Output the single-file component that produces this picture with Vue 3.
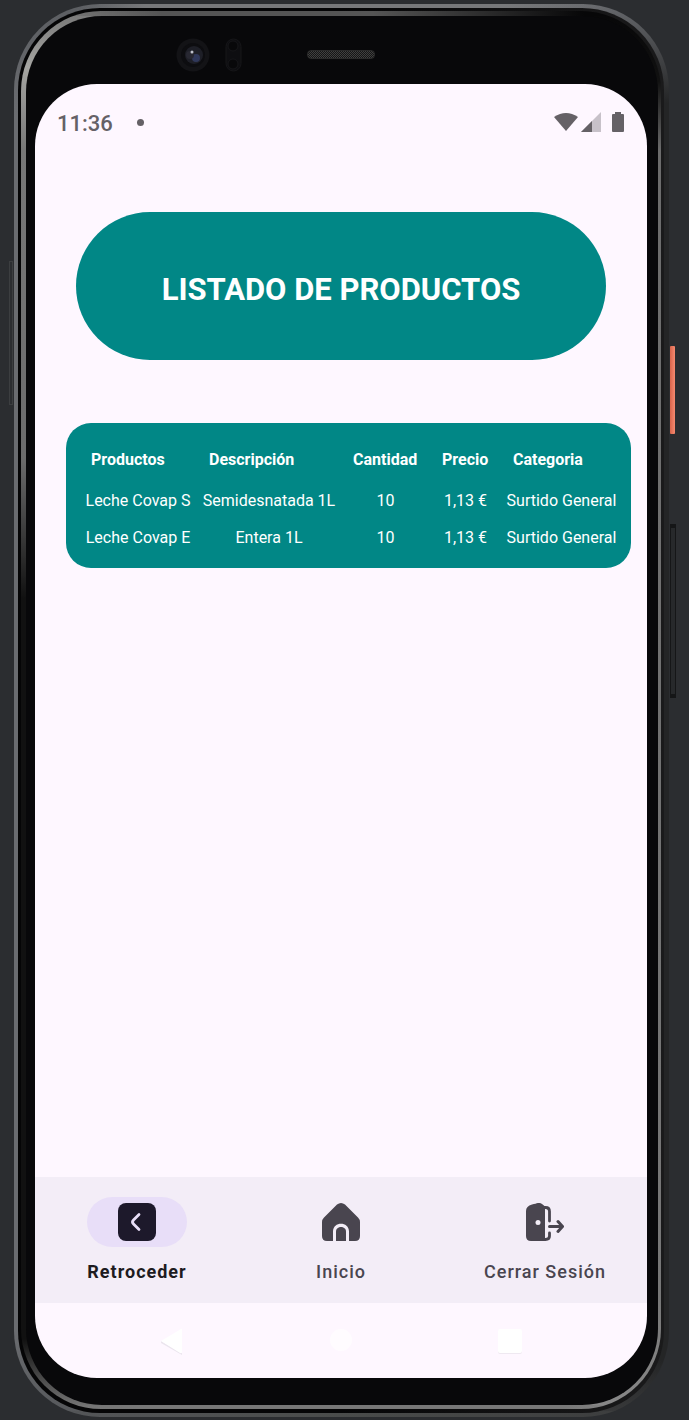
<script setup>
const headers = ['Productos', 'Descripción', 'Cantidad', 'Precio', 'Categoria']
const rows = [
  ['Leche Covap S', 'Semidesnatada 1L', '10', '1,13 €', 'Surtido General'],
  ['Leche Covap E', 'Entera 1L', '10', '1,13 €', 'Surtido General'],
]
</script>

<template>
  <div class="desk">
    <div class="edge">
      <span class="key volume-left"></span>
      <span class="key power"></span>
      <span class="key volume-right"></span>
      <div class="groove">
        <div class="rim">
          <div class="bezel">
            <div class="sensors">
              <svg class="camera" viewBox="0 0 66 36" width="66" height="36" aria-hidden="true">
                <circle cx="17" cy="18" r="16.500" fill="#131316" />
                <circle cx="17" cy="18" r="12" fill="#0d0d10" />
                <circle cx="18" cy="18" r="9" fill="#1e1f27" />
                <circle cx="20" cy="21" r="4" fill="#30385a" />
                <circle cx="14" cy="18" r="4" fill="#282832" />
                <circle cx="16" cy="15" r="1.500" fill="#c0c2cc" />
                <rect x="50" y="2" width="15" height="32" rx="7.500" fill="#0e0e11" stroke="#161619" />
                <circle cx="57" cy="9" r="5" fill="#08080a" stroke="#161619" />
                <circle cx="57" cy="27" r="5" fill="#08080a" stroke="#161619" />
              </svg>
              <span class="speaker"></span>
            </div>

            <div class="screen">
              <header class="status">
                <span class="clock">11:36</span>
                <span class="dot"></span>
                <svg class="signals" viewBox="0 0 70 20" width="70" height="20" aria-hidden="true">
                  <path d="M0 5Q12-3 24 5L12 19Z" fill="#656166" />
                  <path d="M27 20L47 0V20Z" fill="#c7c1c9" />
                  <path d="M27 20L38 9V20Z" fill="#656166" />
                  <path d="M61 0h6v2h2q1 0 1 1v16q0 1-1 1h-10q-1 0-1-1V3q0-1 1-1h2Z" fill="#656166" />
                </svg>
              </header>

              <main>
                <h1>LISTADO DE PRODUCTOS</h1>
                <div class="card">
                  <table>
                    <colgroup>
                      <col class="c1" /><col class="c2" /><col class="c3" /><col class="c4" /><col class="c5" />
                    </colgroup>
                    <thead>
                      <tr>
                        <th v-for="h in headers" :key="h" scope="col">{{ h }}</th>
                      </tr>
                    </thead>
                    <tbody>
                      <tr v-for="row in rows" :key="row[0]">
                        <td v-for="(cell, i) in row" :key="i">{{ cell }}</td>
                      </tr>
                    </tbody>
                  </table>
                </div>
              </main>

              <nav class="tabs">
                <button type="button" class="tab active">
                  <span class="pill">
                    <svg viewBox="0 0 38 38" width="38" height="38" aria-hidden="true">
                      <rect width="38" height="38" rx="8" fill="#1d192b" />
                      <path d="M21 11.500L15.500 17Q13.500 19 15.500 21L21 26.500" fill="none" stroke="#e8def8" stroke-width="2.800" stroke-linecap="round" />
                    </svg>
                  </span>
                  <span>Retroceder</span>
                </button>
                <button type="button" class="tab">
                  <span class="pill">
                    <svg viewBox="0 0 38 38" width="38" height="38" aria-hidden="true">
                      <path d="M15 1.600Q19-1.600 23 1.600L36 14.500Q38 16.500 38 19V33Q38 38 33 38H27V28.500C27 18 11 18 11 28.500V38H5Q0 38 0 33V19Q0 16.500 2 14.500Z" fill="#49454f" />
                      <path d="M14 38V28.500C14 22.500 24 22.500 24 28.500V38Z" fill="#49454f" />
                    </svg>
                  </span>
                  <span>Inicio</span>
                </button>
                <button type="button" class="tab">
                  <span class="pill">
                    <svg viewBox="0 0 38 38" width="38" height="38" aria-hidden="true">
                      <path d="M6 1.500Q8 .8 9.500.8Q13-1 16 1Q19 2.300 19 5V38H5Q0 38 0 33V8Q0 3 6 1.500Z" fill="#49454f" />
                      <circle cx="12" cy="19.500" r="2.500" fill="#f3edf7" />
                      <path d="M18 4.500h1.500q4 0 4 4V18M23.500 30V33q0 3.500-4 3.500H18" fill="none" stroke="#49454f" stroke-width="2.800" stroke-linecap="round" />
                      <path d="M23.500 23.500H36M32 18.500L36.500 23.500L32 28.500" fill="none" stroke="#49454f" stroke-width="3" stroke-linecap="round" stroke-linejoin="round" />
                    </svg>
                  </span>
                  <span>Cerrar Sesión</span>
                </button>
              </nav>

              <footer class="system">
                <button type="button" aria-label="Atrás">
                  <svg viewBox="0 0 26 30" width="26" height="30"><path d="M2 15L23 27V29L2 17Z" fill="#ebe5ee" /><path d="M2 15L22 3Q23 2 23 4V26Q23 28 21 27Z" fill="#fff" /></svg>
                </button>
                <button type="button" aria-label="Pantalla de inicio">
                  <svg viewBox="0 0 26 30" width="26" height="30"><circle cx="13" cy="14" r="11" fill="#fffcff" /></svg>
                </button>
                <button type="button" aria-label="Recientes">
                  <svg viewBox="0 0 26 30" width="26" height="30"><rect x="1" y="4" width="24" height="24" rx="2" fill="#efe9f1" /><rect x="1" y="3" width="24" height="24" rx="2" fill="#fff" /></svg>
                </button>
              </footer>
            </div>
          </div>
        </div>
      </div>
    </div>
  </div>
</template>

<style>
body {
  margin: 0;
  background: #2b2d30;
}
</style>

<style scoped>
.desk {
  box-sizing: border-box;
  min-height: 100vh;
  display: flex;
  padding: 4px 20px 3px 14px;
  background: #2b2d30;
  font-family: Roboto, "Liberation Sans", sans-serif;
}
.edge {
  position: relative;
  flex: 1;
  display: flex;
  padding: 4px 5px 4px 4px;
  border-radius: 86px;
  background:
    linear-gradient(to right, transparent 10%, #77787a 20%, #77787a 75%, transparent 92%) top / 100% 8px no-repeat,
    linear-gradient(to right, #55575a, #4a4c4b 50%, #3a3b3c) bottom / 100% 6px no-repeat,
    linear-gradient(#5c5e62, #6a6c70 8%, #6a6c70 94%, #55575a) left / 50% 100% no-repeat,
    linear-gradient(#66686c, #242526 7%, #242526 96%, #3a3b3c) right / 50% 100% no-repeat;
}
.groove {
  flex: 1;
  display: flex;
  padding: 3px 3px 4px;
  border-radius: 82px;
  background: linear-gradient(to right, #050506 50%, #1a1a1b);
}
.rim {
  flex: 1;
  display: flex;
  padding: 5px 3px 4px 5px;
  border-radius: 80px;
  background:
    linear-gradient(to right, transparent 5%, #555 22%, #555 55%, #070708 88%) top / 100% 5px no-repeat,
    linear-gradient(to right, transparent 5%, #777 20%, #777 85%, transparent 95%) bottom / 100% 4px no-repeat,
    linear-gradient(#777, #a5a5a2 4%, #777 10%, #6c6c6c 32%, #111 42%, #111 95%, #777) left / 50% 100% no-repeat,
    linear-gradient(#070708, #111 5%, #6c6c6c 10%, #777 92%, #888) right / 50% 100% no-repeat;
}
.bezel {
  flex: 1;
  display: flex;
  flex-direction: column;
  padding: 0 11px 27px 9px;
  border-radius: 76px;
  background: #08080a;
}
.sensors {
  height: 68px;
  display: grid;
  grid-template-columns: 1fr 68px 1fr;
  align-items: center;
}
.camera {
  justify-self: end;
  margin: 10px 65px 0 0;
}
.speaker {
  height: 9px;
  margin-top: 8px;
  border-radius: 4px;
  box-sizing: border-box;
  border: 1px solid #2a2a2a;
  background: repeating-conic-gradient(#404040 0 25%, #161616 0 50%) 0 0 / 2px 2px;
}
.screen {
  flex: 1;
  display: flex;
  flex-direction: column;
  overflow: hidden;
  border-radius: 62px;
  background: #fef7ff;
}
.status {
  display: flex;
  align-items: center;
  height: 76px;
  padding: 0 23px 0 22px;
}
.clock {
  color: #656166;
  font-size: 22px;
  line-height: 28px;
  font-weight: 500;
  padding-top: 4px;
}
.dot {
  width: 7px;
  height: 7px;
  margin-left: 24px;
  border-radius: 50%;
  background: #656166;
}
.signals {
  margin-left: auto;
}
main {
  flex: 1;
  display: flex;
  flex-direction: column;
  padding: 52px 16px 0 31px;
}
h1 {
  box-sizing: border-box;
  margin: 0 25px 0 10px;
  padding: 60px 0 52px;
  border-radius: 74px;
  background: #018786;
  color: #fff;
  font-size: 31px;
  line-height: 36px;
  font-weight: 700;
  text-align: center;
  white-space: nowrap;
}
.card {
  margin-top: 63px;
  padding: 18px 9px 12px 13px;
  border-radius: 25px;
  background: #018786;
  color: #fff;
}
table {
  width: 100%;
  table-layout: fixed;
  border-collapse: collapse;
  font-size: 16px;
  line-height: 19px;
  white-space: nowrap;
}
.c1 { width: 118px; }
.c2 { width: 144px; }
.c3 { width: 89px; }
.c4 { width: 71px; }
th {
  padding: 9px 12px 13px;
  font-weight: 700;
  text-align: left;
}
td {
  padding: 9px 0;
  text-align: center;
}
.tabs {
  display: grid;
  grid-template-columns: repeat(3, 1fr);
  background: #f3edf7;
}
.tab {
  display: flex;
  flex-direction: column;
  align-items: center;
  gap: 13px;
  padding: 20px 0;
  border: 0;
  background: none;
  color: #49454f;
  font: 500 18px/23px Roboto, "Liberation Sans", sans-serif;
  letter-spacing: 1px;
}
.pill {
  display: flex;
  align-items: center;
  justify-content: center;
  width: 100px;
  height: 50px;
  border-radius: 25px;
}
.active {
  color: #1d1b20;
  font-weight: 700;
}
.active .pill {
  background: #e8def8;
}
.system {
  display: flex;
  justify-content: space-between;
  align-items: center;
  height: 75px;
  padding: 0 124px;
}
.system button {
  display: flex;
  padding: 0;
  border: 0;
  background: none;
}
.key {
  position: absolute;
  box-sizing: border-box;
}
.volume-left {
  left: -5px;
  top: 257px;
  width: 4px;
  height: 144px;
  border: 1px solid #3c3e40;
}
.power {
  right: -6px;
  top: 342px;
  width: 5px;
  height: 88px;
  border-radius: 1px;
  background: linear-gradient(to right, #d9644b, #f58a70);
}
.volume-right {
  right: -7px;
  top: 520px;
  width: 6px;
  height: 174px;
  border: solid #151617;
  border-width: 4px 1px;
  background: #27292b;
}
</style>
